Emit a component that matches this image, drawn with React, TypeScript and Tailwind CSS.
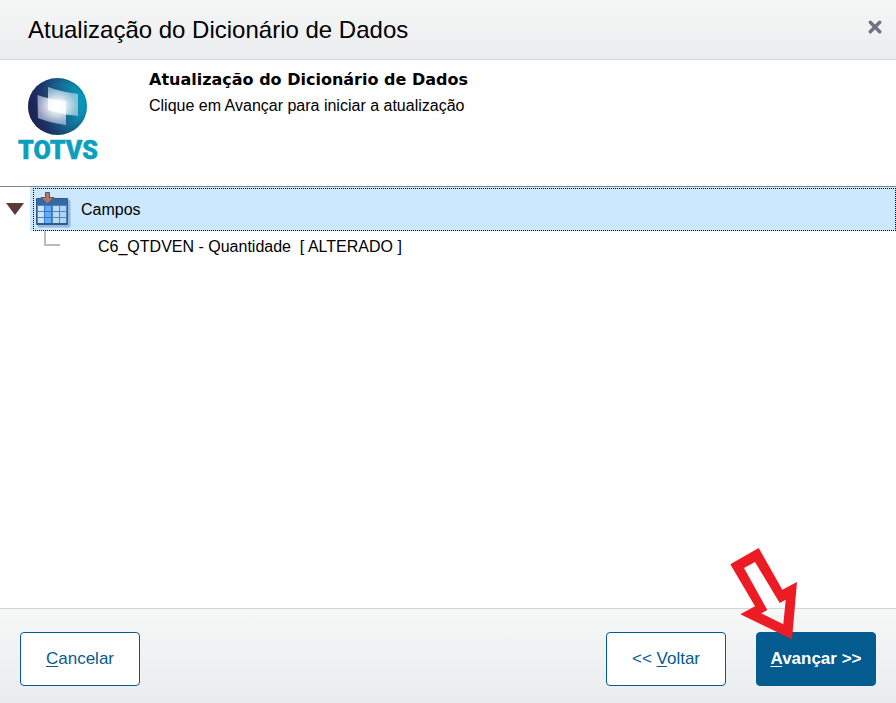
import React from "react"

const TotvsLogo = () => (
  <svg width="84" height="92" viewBox="0 0 84 92" role="img" aria-label="TOTVS">
    <defs>
      <linearGradient id="sphere" x1="0" y1="0.6" x2="1" y2="0.4">
        <stop offset="0" stopColor="#1e1c4c" />
        <stop offset="0.3" stopColor="#1c3a6c" />
        <stop offset="0.65" stopColor="#14709a" />
        <stop offset="1" stopColor="#06a6c4" />
      </linearGradient>
      <radialGradient id="shade" cx="0.54" cy="0.48" r="0.54">
        <stop offset="0.7" stopColor="#1b1b4b" stopOpacity="0" />
        <stop offset="1" stopColor="#1b2a5b" stopOpacity="0.4" />
      </radialGradient>
      <radialGradient id="glow">
        <stop offset="0.2" stopColor="#ffffff" />
        <stop offset="1" stopColor="#ffffff" stopOpacity="0" />
      </radialGradient>
      <clipPath id="panels">
        <path d="M32 11Q46 16 62 18V40Q56 40 50 39V49Q34 47 22 42L21.5 19Q27 21 32 22Z" />
      </clipPath>
    </defs>
    <ellipse cx="41.5" cy="30.5" rx="29.5" ry="28.5" fill="url(#sphere)" />
    <ellipse cx="41.5" cy="30.5" rx="29.5" ry="28.5" fill="url(#shade)" />
    <path d="M32 11Q46 16 62 18V40Q46 38 32 34Z" fill="#c8e0f0" fillOpacity="0.65" />
    <path d="M21.5 19Q35 24 50 25V49Q34 47 22 42Z" fill="#ccd4ec" fillOpacity="0.65" />
    <path d="M32 22.5Q41 24.5 50 25V38.5Q40 36.5 32 34Z" fill="#ffffff" fillOpacity="0.75" />
    <ellipse cx="41" cy="30" rx="20" ry="17" fill="url(#glow)" clipPath="url(#panels)" />
    <text x="42" y="83" textAnchor="middle" fill="#0a9fbe" stroke="#0a9fbe" strokeWidth="0.5" className="font-['Roboto',sans-serif] text-[25px] font-black">
      TOTVS
    </text>
  </svg>
)

const TableIcon = () => (
  <svg width="38" height="38" viewBox="0 0 38 38" aria-hidden="true">
    <rect x="4" y="9" width="33" height="28" rx="2" fill="#5d86ac" fillOpacity="0.25" />
    <rect x="3" y="8" width="33" height="28" rx="2" fill="#5d86ac" fillOpacity="0.3" />
    <rect x="2" y="7" width="32" height="27" rx="1" fill="#2f5b8b" />
    <rect x="3" y="8" width="30" height="6" fill="#336aa6" />
    <rect x="3" y="14" width="30" height="18" fill="#4c87c2" />
    <rect x="10" y="14" width="8" height="18" fill="#2f78d2" />
    {[15, 21, 27].map((y) => (
      <g key={y}>
        <rect x="4" y={y} width="6" height="5" fill="#cbe5f9" />
        <rect x="11" y={y} width="6" height="5" fill="#68aaf2" />
        <rect x="19" y={y} width="6" height="5" fill="#bcdcf6" />
        <rect x="26" y={y} width="6" height="5" fill="#b0d4f2" />
      </g>
    ))}
    <path d="M11.5 1.500H15.500V6.500H20L13.500 13L7 6.500H11.500Z" fill="#a47a75" stroke="#70504f" />
  </svg>
)

const PointerArrow = () => (
  <svg className="absolute -top-21 -left-[26px] pointer-events-none" width="68" height="92" viewBox="730 548 68 92" aria-hidden="true">
    <path
      fillRule="evenodd"
      fill="#ed1c24"
      d="M758.7 548L782.3 589.7L797 582L792 639.3L740.3 614.3L755 606.3L730.3 564.3ZM755 562L779.7 603L785.7 599.7L783.3 624.3L761.3 613.3L767.3 610L744 568Z"
    />
  </svg>
)

const buttonBase = "w-30 h-[54px] rounded border border-[#045b8f] text-[17px] cursor-pointer"

const App = () => {
  return (
    <div className="min-h-screen flex flex-col bg-white text-black text-[17px] leading-5 font-['Liberation_Sans',Arial,sans-serif]">
      <header className="flex items-start justify-between h-15 pl-7 pr-3 pt-3 border-b border-[#d4d5d7] bg-linear-to-b from-[#f5f7f6] to-[#ebecef]">
        <h1 className="text-2xl leading-9">Atualização do Dicionário de Dados</h1>
        <button type="button" aria-label="Fechar" className="p-0.5 mt-1.5 cursor-pointer">
          <svg width="14" height="14" viewBox="0 0 14 14" stroke="#6b7383" strokeWidth="3.4" strokeLinecap="round">
            <path d="M2.3 2.3L11.7 11.7M11.7 2.3L2.3 11.7" />
          </svg>
        </button>
      </header>

      <section className="flex items-start gap-[49px] h-[127px] pl-4 pt-4 border-b border-[#7f858b]">
        <TotvsLogo />
        <div className="-mt-1.5">
          <h2 className="font-['DejaVu_Sans',Verdana,sans-serif] font-bold text-base leading-5">Atualização do Dicionário de Dados</h2>
          <p className="mt-1.5 text-base leading-5">Clique em Avançar para iniciar a atualização</p>
        </div>
      </section>

      <main className="flex-1 text-base leading-5">
        <ul role="tree">
          <li role="treeitem" aria-expanded="true">
            <div className="flex items-center">
              <button type="button" aria-label="Recolher Campos" className="flex justify-center w-[30px] cursor-pointer">
                <svg width="18" height="12" viewBox="0 0 18 12">
                  <path d="M0 0H18L9 12Z" fill="#5b3a38" />
                </svg>
              </button>
              <div className="flex-1 bg-[#cce8ff] pl-[3px] pt-px">
                <div className="flex items-center gap-[9px] h-[43px] border border-dotted border-black">
                  <TableIcon />
                  <span>Campos</span>
                </div>
              </div>
            </div>
            <ul role="group">
              <li role="treeitem" className="flex items-start pl-11">
                <span className="w-4 h-[15px] border-l-2 border-b-2 border-[#bdb9b6]" />
                <span className="pl-[38px] pt-1.5 whitespace-pre">{"C6_QTDVEN - Quantidade  [ ALTERADO ]"}</span>
              </li>
            </ul>
          </li>
        </ul>
      </main>

      <footer className="flex items-start justify-between h-[95px] px-5 pt-[23px] border-t border-[#d4d5d7] bg-linear-to-b from-[#f5f7f6] to-[#ebecef]">
        <button type="button" className={`${buttonBase} bg-white text-[#045b8f]`}>
          <span className="underline underline-offset-2">C</span>ancelar
        </button>
        <div className="flex gap-[30px]">
          <button type="button" className={`${buttonBase} bg-white text-[#045b8f]`}>
            &lt;&lt; <span className="underline underline-offset-2">V</span>oltar
          </button>
          <div className="relative">
            <button type="button" className={`${buttonBase} bg-[#045b8f] text-white font-bold`}>
              <span className="underline underline-offset-2">A</span>vançar &gt;&gt;
            </button>
            <PointerArrow />
          </div>
        </div>
      </footer>
    </div>
  )
}

export default App
